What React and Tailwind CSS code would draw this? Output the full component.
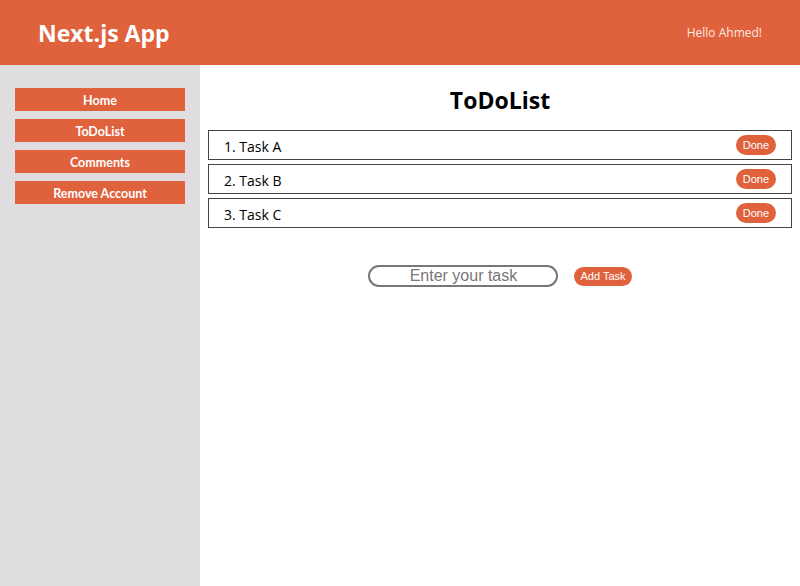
import React from "react";

const tasks = ["Task A", "Task B", "Task C"];
const links = ["Home", "ToDoList", "Comments", "Remove Account"];

export default function App() {
	return (
		<div className="flex h-[586px] w-[800px] flex-col font-['Open_Sans',sans-serif]">
			<header className="flex h-[65px] shrink-0 items-center justify-between bg-[#e0623d] px-[38px] text-white">
				<h1 className="pt-[2px] text-[23px] font-bold">Next.js App</h1>
				<span className="text-[12px] text-[#fde8e0]">Hello Ahmed!</span>
			</header>
			<div className="flex flex-1">
				<aside className="flex w-[200px] shrink-0 flex-col gap-2 bg-[#dfdddf] px-[15px] pt-[23px]">
					{links.map((l) => (
						<a key={l} className="flex h-[23px] items-center justify-center bg-[#e0623d] pt-[3px] font-['Lato',sans-serif] text-[12.5px] font-bold text-white">
							{l}
						</a>
					))}
				</aside>
				<main className="flex flex-1 flex-col px-2 pt-[20px]">
					<h2 className="text-center text-[23px] font-bold leading-[30px] text-black">ToDoList</h2>
					<ul className="mt-[15px] flex flex-col gap-[4px]">
						{tasks.map((t, i) => (
							<li key={t} className="flex h-[30px] items-center justify-between border border-[#444] pl-[15px] pr-[15px]">
								<span className="pt-[2px] text-[14px] text-black">{i + 1}. {t}</span>
								<button className="h-[20px] rounded-full bg-[#e0623d] px-[7px] font-['Liberation_Sans',sans-serif] text-[11px] text-white">
									Done
								</button>
							</li>
						))}
					</ul>
					<div className="mt-[37px] flex items-center justify-center gap-4">
						<input
							placeholder="Enter your task"
							className="h-[22px] w-[190px] rounded-full border-2 border-[#777] text-center font-['Liberation_Sans',sans-serif] text-[16px] placeholder:text-[#777] outline-none"
						/>
						<button className="h-[19px] rounded-full bg-[#e0623d] px-[6px] font-['Liberation_Sans',sans-serif] text-[11px] text-white">
							Add Task
						</button>
					</div>
				</main>
			</div>
		</div>
	);
}
